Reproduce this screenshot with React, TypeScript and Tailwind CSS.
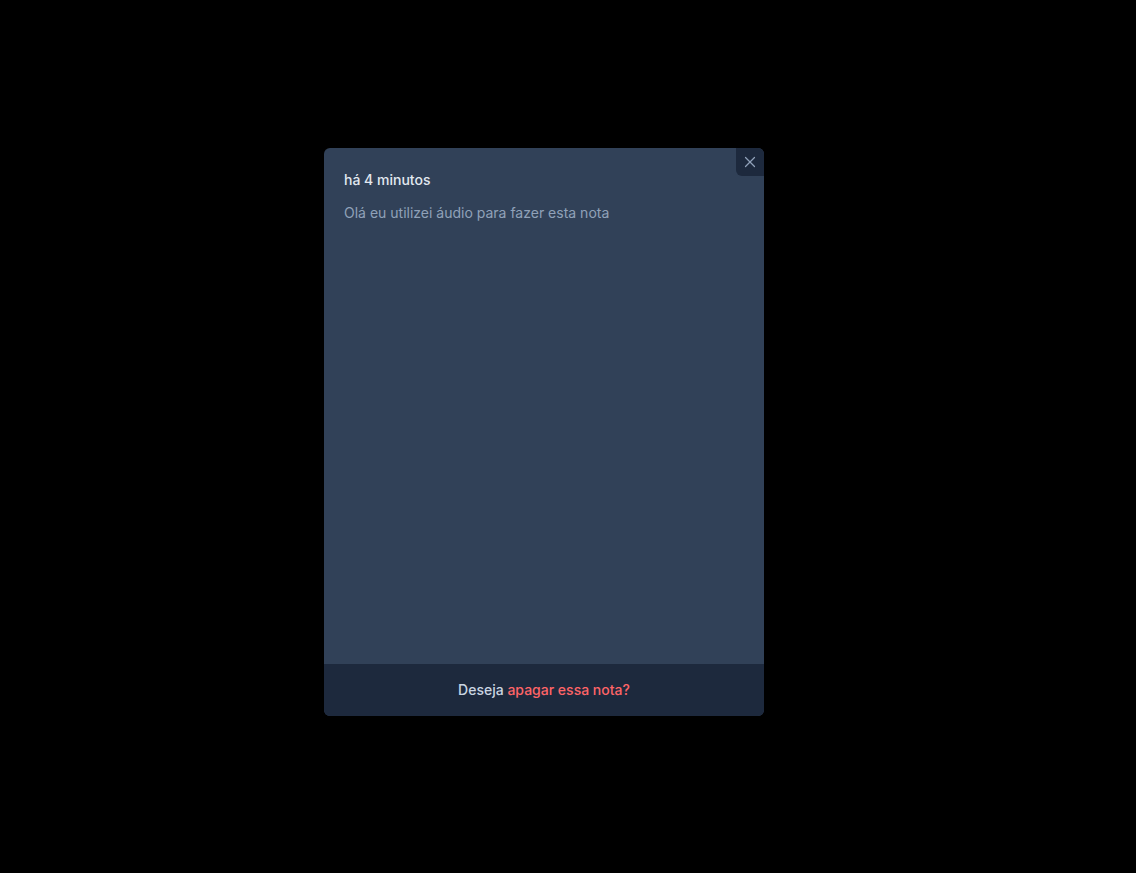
import { X } from "lucide-react";

export default function App() {
  return (
    <div
      className="min-h-screen w-full bg-black pl-[324px] pt-[148px]"
      style={{ fontFamily: "Inter, 'Noto Sans', sans-serif" }}
    >
      <div className="relative flex h-[568px] w-[440px] flex-col overflow-hidden rounded-md bg-slate-700">
        {/* close */}
        <button className="absolute right-0 top-0 flex h-7 w-7 items-center justify-center rounded-bl-md bg-slate-800 text-slate-400">
          <X className="h-[18px] w-[18px]" strokeWidth={1.6} />
        </button>

        <div className="flex flex-1 flex-col gap-[11px] px-5 pt-[22px]">
          <span className="text-sm font-medium text-slate-200">há 4 minutos</span>
          <p className="text-sm leading-6 text-slate-400">
            Olá eu utilizei áudio para fazer esta nota
          </p>
        </div>

        <button className="w-full bg-slate-800 py-4 text-center text-sm font-medium text-slate-300">
          Deseja <span className="text-red-400">apagar essa nota?</span>
        </button>
      </div>
    </div>
  );
}
